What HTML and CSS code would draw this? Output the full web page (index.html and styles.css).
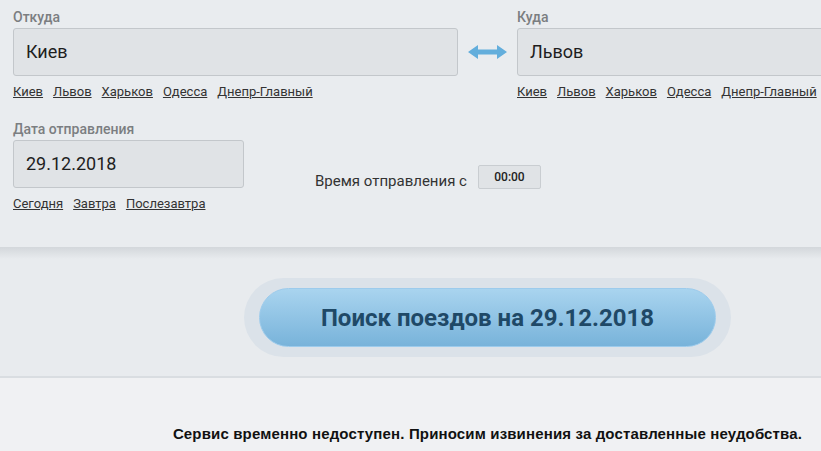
FILE: index.html
```html
<!DOCTYPE html>
<html lang="ru">
<head>
    <meta charset="UTF-8">
    <meta name="viewport" content="width=device-width, initial-scale=1.0">
    <link rel="stylesheet" href="styles.css">
    <title>Поиск поездов</title>
</head>
<body>
    <div id="page">
        <div class="panel">
            <div class="route">
                <div class="field wide">
                    <div class="label">Откуда</div>
                    <div class="box">Киев</div>
                    <div class="links">
                        <a href="#">Киев</a>
                        <a href="#">Львов</a>
                        <a href="#">Харьков</a>
                        <a href="#">Одесса</a>
                        <a href="#">Днепр-Главный</a>
                    </div>
                </div>

                <div class="swap">
                    <svg width="39" height="14" viewBox="0 0 39 14">
                        <path d="M0 7 L10 0 L10 4.5 L29 4.5 L29 0 L39 7 L29 14 L29 9.5 L10 9.5 L10 14 Z" fill="#63aedc"/>
                    </svg>
                </div>

                <div class="field wide">
                    <div class="label">Куда</div>
                    <div class="box">Львов</div>
                    <div class="links">
                        <a href="#">Киев</a>
                        <a href="#">Львов</a>
                        <a href="#">Харьков</a>
                        <a href="#">Одесса</a>
                        <a href="#">Днепр-Главный</a>
                    </div>
                </div>
            </div>

            <div class="when">
                <div class="field date">
                    <div class="label">Дата отправления</div>
                    <div class="box">29.12.2018</div>
                    <div class="links">
                        <a href="#">Сегодня</a>
                        <a href="#">Завтра</a>
                        <a href="#">Послезавтра</a>
                    </div>
                </div>

                <div class="time">
                    <span class="time-label">Время отправления с</span>
                    <span class="time-box">00:00</span>
                </div>
            </div>
        </div>

        <div class="search">
            <div class="search-pill">
                <button id="searchBtn">Поиск поездов на 29.12.2018</button>
            </div>
        </div>

        <div class="notice">
            Сервис временно недоступен. Приносим извинения за доставленные неудобства.
        </div>
    </div>
</body>
</html>
```

FILE: styles.css
```css
html, body {
    margin: 0;
    padding: 0;
    overflow: hidden;
    background-color: #f0f1f3;
    font-family: Roboto, Arial, sans-serif;
}

#page {
    width: 975px;
}

.panel {
    background-color: #e9ecef;
    padding: 10px 13px 35px 13px;
}

.route {
    display: flex;
}

.field.wide {
    width: 445px;
}

.field.date {
    width: 231px;
}

.label {
    font-size: 14px;
    line-height: 14px;
    font-weight: 500;
    color: #7b7e81;
    margin-bottom: 4px;
}

.box {
    box-sizing: border-box;
    height: 48px;
    padding: 0 12px;
    line-height: 46px;
    font-size: 18px;
    color: #1e1e1e;
    background-color: #e0e3e6;
    border: 1px solid #c3c7cb;
    border-radius: 3px;
}

.links {
    margin-top: 8px;
    line-height: 16px;
    font-size: 13px;
    display: flex;
    gap: 10px;
}

.links a {
    color: #333;
}

.swap {
    width: 59px;
    height: 48px;
    margin-top: 18px;
    display: flex;
    justify-content: center;
    align-items: center;
}

.when {
    display: flex;
    margin-top: 22px;
}

.time {
    margin-left: 71px;
    margin-top: 43px;
    display: flex;
    align-items: flex-start;
}

.time-label {
    font-size: 15px;
    color: #333;
    margin-top: 7px;
    margin-right: 11px;
}

.time-box {
    box-sizing: border-box;
    width: 63px;
    height: 24px;
    line-height: 22px;
    text-align: center;
    font-size: 12px;
    font-weight: 500;
    color: #222;
    background-color: #e0e3e6;
    border: 1px solid #c9cdd1;
    border-radius: 2px;
}

.search {
    background: linear-gradient(to bottom, #d3d7db 0px, #e8ebee 12px);
    padding: 31px 0 19px 0;
    border-bottom: 2px solid #d9dde1;
    display: flex;
    justify-content: center;
}

.search-pill {
    background-color: #dbe2e9;
    border-radius: 40px;
    padding: 10px 15px;
}

#searchBtn {
    display: block;
    width: 457px;
    height: 59px;
    border: 1px solid #9ccbec;
    border-radius: 30px;
    background: linear-gradient(to bottom, #a9d4ef, #78b3da);
    font-family: Roboto, Arial, sans-serif;
    font-size: 24px;
    font-weight: bold;
    color: #1f4967;
    cursor: pointer;
}

.notice {
    text-align: center;
    padding-top: 47px;
    font-family: "Liberation Sans", Arial, sans-serif;
    font-size: 15px;
    letter-spacing: 0.15px;
    font-weight: bold;
    color: #111;
}
```
